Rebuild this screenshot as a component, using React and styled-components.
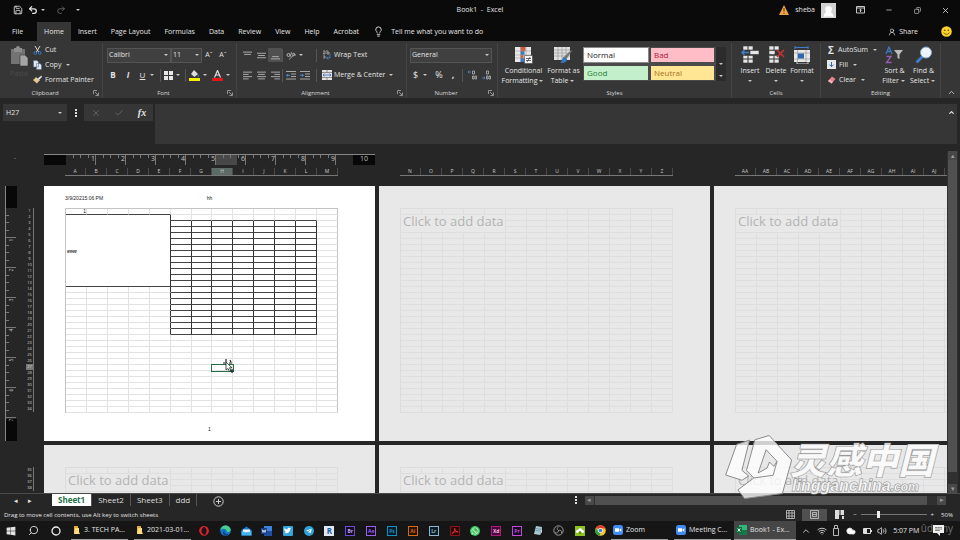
import styled, { createGlobalStyle, css } from "styled-components";
import { useState } from "react";
import {
  FaWindows,
  FaOpera,
  FaTwitter,
  FaTelegramPlane,
  FaWhatsapp,
} from "react-icons/fa";
import {
  Search,
  Lightbulb,
  Minus,
  X,
  Check,
  ChevronUp,
  Copy as Restore,
  Undo2,
  Redo2,
  Save,
  Volume2,
  Wifi,
  Cloud,
  UserRound,
} from "lucide-react";

const GlobalStyle = createGlobalStyle`
  * {
    box-sizing: border-box;
  }
  body {
    margin: 0;
    background: #262626;
    color: #e4e4e4;
    font: 7px/10px "Open Sans", "Segoe UI", sans-serif;
  }
  button, input, textarea, select {
    margin: 0;
    padding: 0;
    border: 0;
    background: none;
    color: inherit;
    font: inherit;
  }
  svg {
    display: block;
    flex: none;
  }
`;

const Window = styled.div`
  display: flex;
  flex-direction: column;
  height: 100vh;
  overflow: hidden;
`;

const Row = styled.div`
  display: flex;
  align-items: center;
  gap: ${(p) => p.$gap || 0}px;
`;

/* title bar */

const TitleBar = styled.header`
  display: grid;
  grid-template-columns: 1fr auto 1fr;
  align-items: center;
  height: 20px;
  flex: none;
  background: #0a0a0a;
`;

const QuickAccess = styled(Row)`
  padding-left: 12px;
  gap: 5px;
`;

const WindowControls = styled(Row)`
  justify-content: flex-end;
  padding-right: 10px;
  gap: 20px;
`;

const Account = styled(Row)`
  gap: 6px;
`;

const Avatar = styled.span`
  display: flex;
  align-items: flex-end;
  justify-content: center;
  width: 15px;
  height: 15px;
  background: #d2d2d2;
`;

const Title = styled.h1`
  margin: 0;
  font-size: 7px;
  font-weight: 400;
  white-space: pre;
`;

const IconButton = styled.button`
  display: flex;
  align-items: center;
  justify-content: center;
  gap: 1px;
  min-width: ${(p) => p.$w || 8}px;
  height: ${(p) => p.$h || 12}px;
  background: ${(p) => (p.$on ? "#505050" : "none")};
  color: ${(p) => (p.$dim ? "#6c6c6c" : "inherit")};
`;

const Mirrored = styled.span`
  display: block;
  transform: scaleX(-1);
`;

/* ribbon tabs */

const TabBar = styled.nav`
  display: flex;
  align-items: stretch;
  height: 21px;
  flex: none;
  padding: 2px 8px 0 5px;
  background: #0a0a0a;
`;

const Tab = styled.button`
  padding: 0 7px;
  background: ${(p) => (p.$active ? "#363636" : "none")};
  &:first-child {
    margin-right: 7px;
  }
`;

const TellMe = styled.button`
  display: flex;
  align-items: center;
  gap: 7px;
  padding-left: 7px;
`;

const ShareArea = styled(Row)`
  margin-left: auto;
  gap: 23px;
`;

/* ribbon */

const Ribbon = styled.div`
  display: flex;
  height: 57px;
  flex: none;
  padding-top: 2px;
  background: #363636;
`;

const Group = styled.section`
  display: flex;
  flex-direction: column;
  flex: none;
  width: ${(p) => p.$w}px;
  border-right: 1px solid #444;
`;

const GroupBody = styled.div`
  display: flex;
  flex: 1;
  padding: ${(p) => p.$pad || "0 6px"};
  gap: ${(p) => p.$gap || 0}px;
`;

const GroupFooter = styled.div`
  position: relative;
  display: flex;
  align-items: center;
  justify-content: center;
  height: 11px;
  padding-right: ${(p) => (p.$plain ? 0 : 12)}px;
  font-size: 6px;
  color: #d8d8d8;
  svg {
    position: absolute;
    right: 3px;
  }
`;

const Stack = styled.div`
  display: flex;
  flex-direction: column;
  justify-content: space-around;
  align-items: flex-start;
`;

const Command = styled.button`
  display: flex;
  align-items: center;
  gap: ${(p) => p.$gap || 3}px;
  height: 14px;
  white-space: nowrap;
`;

const BigCommand = styled.button`
  display: flex;
  flex-direction: column;
  align-items: center;
  justify-content: flex-start;
  width: ${(p) => p.$w}px;
  padding-top: 3px;
  color: ${(p) => (p.$dim ? "#4c4c4c" : "inherit")};
  white-space: nowrap;
  svg {
    margin-bottom: 2px;
  }
`;

const Caret = styled.i`
  display: inline-block;
  flex: none;
  border: 2px solid transparent;
  border-top-color: #c8c8c8;
  border-bottom: 0;
  margin: ${(p) => (p.$below ? "4px" : "0")} 2px 0;
  vertical-align: middle;
`;

const Picker = styled.div`
  display: flex;
  align-items: center;
  width: ${(p) => p.$w}px;
  height: 15px;
  border: 1px solid #545454;
  background: #404040;
  select {
    appearance: none;
    flex: 1;
    min-width: 0;
    padding-left: 1px;
  }
`;

const Divider = styled.span`
  width: 1px;
  height: 13px;
  background: #555;
`;

const ToolRow = styled(Row)`
  height: 20px;
`;

const Glyph = styled.span`
  min-width: 8px;
  font-size: ${(p) => p.$size || 8}px;
  font-weight: ${(p) => (p.$bold ? 700 : 400)};
  font-style: ${(p) => (p.$italic ? "italic" : "normal")};
  text-decoration: ${(p) => (p.$underline ? "underline" : "none")};
`;

const FxGlyph = styled(Glyph)`
  font-family: "Liberation Serif", "Times New Roman", serif;
`;

const Gallery = styled.div`
  display: grid;
  grid-template-columns: 66px 65px 10px;
  grid-template-rows: 16px 16px;
  gap: 2px 1px;
  align-self: flex-start;
  margin: 4px 0 0 1px;
  background: #4a4a4a;
`;

const StyleCell = styled.button`
  margin: 1px;
  padding-left: 3px;
  background: ${(p) => p.$bg};
  color: ${(p) => p.$color};
  font-size: 8px;
  text-align: left;
  outline: ${(p) => (p.$active ? "1px solid #8a8a8a" : "none")};
`;

const GalleryScroll = styled.div`
  grid-column: 3;
  grid-row: 1 / 3;
  display: flex;
  flex-direction: column;
  justify-content: flex-end;
  align-items: center;
  gap: 10px;
  padding-bottom: 4px;
  background: #2c2c2c;
`;

const CollapseRibbon = styled.button`
  margin: auto 4px 0 auto;
  height: 12px;
`;

/* formula bar */

const FormulaBar = styled.div`
  display: flex;
  align-items: flex-start;
  height: 46px;
  flex: none;
  padding: 6px 3px 0;
`;

const NameBox = styled.div`
  display: flex;
  align-items: center;
  width: 64px;
  height: 17px;
  padding-right: 3px;
  background: #363636;
  input {
    flex: 1;
    min-width: 0;
    padding-left: 3px;
  }
`;

const DotHandle = styled.span`
  display: flex;
  flex-direction: column;
  justify-content: center;
  align-items: center;
  gap: 1px;
  width: 17px;
  height: ${(p) => p.$h || 17}px;
  i {
    width: 2px;
    height: 2px;
    background: #ddd;
  }
`;

const FormulaButtons = styled(Row)`
  justify-content: space-around;
  width: 69px;
  height: 17px;
  margin-right: 2px;
  background: #363636;
`;

const FormulaField = styled.div`
  display: flex;
  flex: 1;
  height: 40px;
  background: #363636;
  textarea {
    flex: 1;
    resize: none;
  }
  button {
    width: 9px;
    height: 16px;
  }
`;

/* sheet area */

const WorkArea = styled.main`
  display: flex;
  flex: 1;
  min-height: 0;
`;

const Canvas = styled.div`
  display: grid;
  grid-template-columns: 40px repeat(3, 331px);
  grid-template-rows: 28px 255px 255px;
  gap: 4px;
  flex: 1;
  min-width: 0;
  padding-top: 10px;
  overflow: hidden;
`;

const Corner = styled.div`
  padding-left: 14px;
  color: #888;
  line-height: 7px;
`;

const ColumnHead = styled.div`
  display: flex;
  flex-direction: column;
  padding-bottom: 6px;
`;

const Ruler = styled.div`
  display: flex;
  height: 11px;
  border-top: 1px solid #888;
`;

const RulerEnd = styled.div`
  ${(p) => (p.$vertical ? "height" : "width")}: 22px;
  flex: none;
  background: #080808;
  color: #c4c4c4;
  line-height: 8px;
  text-align: center;
  &:last-child {
    ${(p) => (p.$vertical ? "margin-top" : "margin-left")}: auto;
  }
`;

const Inch = styled.div`
  display: flex;
  flex-direction: ${(p) => (p.$vertical ? "column" : "row")};
  position: relative;
  flex: 0 0 30px;
  background: ${(p) =>
    p.$lit ? "linear-gradient(to right, #484848 21px, transparent 21px)" : "none"};
  i {
    flex: 1;
    ${(p) => (p.$vertical ? "border-bottom" : "border-right")}: 1px solid #777;
    ${(p) => (p.$vertical ? "width" : "height")}: 3px;
  }
  i:nth-child(4) {
    ${(p) => (p.$vertical ? "width" : "height")}: 10px;
  }
  span {
    position: absolute;
    color: #c4c4c4;
    ${(p) =>
      p.$vertical
        ? css`
            bottom: -7px;
            left: 4px;
            font-size: 5px;
            transform: rotate(-90deg);
          `
        : css`
            top: -1px;
            right: 1px;
          `}
  }
`;

const Letters = styled.div`
  display: flex;
  width: 273px;
  height: 8px;
  margin: auto 0 0 21px;
  border-bottom: 1px solid #777;
`;

const Letter = styled.span`
  flex: 0 0 21px;
  border-right: 1px solid #4a4a4a;
  background: ${(p) => (p.$on ? "#5d6b66" : "none")};
  color: #c8c8c8;
  font-size: 5px;
  line-height: 7px;
  text-align: center;
`;

const RowRail = styled.div`
  display: flex;
  align-items: flex-start;
  gap: 9px;
  padding-left: 5px;
`;

const SideRuler = styled.div`
  display: flex;
  flex-direction: column;
  width: 12px;
  height: 255px;
  border-left: ${(p) => (p.$blank ? "0" : "1px solid #888")};
`;

const RowNumbers = styled.div`
  width: 8px;
  margin-top: 22px;
  border-right: 1px solid #777;
`;

const RowNumber = styled.div`
  height: 6px;
  background: ${(p) => (p.$on ? "#777" : "none")};
  color: #d4d4d4;
  font-size: 4px;
  line-height: 6px;
  text-align: center;
`;

const Page = styled.article`
  position: relative;
  height: 255px;
  padding: 22px 21px 0;
  background: ${(p) => (p.$live ? "#fff" : "#e8e8e8")};
  color: #222;
`;

const PageHeader = styled.div`
  position: absolute;
  top: 8px;
  left: 21px;
  right: 21px;
  display: grid;
  grid-template-columns: 1fr auto 1fr;
  font: 5px/8px "Liberation Sans", Arial, sans-serif;
`;

const PageFooter = styled.div`
  padding-top: 12px;
  font: 5px/8px "Liberation Sans", Arial, sans-serif;
  text-align: center;
`;

const Sheet = styled.table`
  width: 273px;
  table-layout: fixed;
  border-spacing: 0;
  border-left: 1px solid ${(p) => (p.$live ? "#c4c4c4" : "#dcdcdc")};
  border-top: 1px solid ${(p) => (p.$live ? "#c4c4c4" : "#dcdcdc")};
  font: 5px/5px "Liberation Sans", Arial, sans-serif;
`;

const Cell = styled.td`
  height: 6px;
  padding: 0;
  border: 0 solid ${(p) => (p.$live ? "#e2e2e2" : "#dedede")};
  border-width: 0 1px 1px 0;
  ${(p) => p.$edge && "border-right-color: #c4c4c4;"}
  ${(p) => p.$right && "border-right-color: #333;"}
  ${(p) => p.$bottom && "border-bottom-color: #444;"}
  text-align: ${(p) => (p.$align ? p.$align : "left")};
  ${(p) =>
    p.$selected &&
    css`
      outline: 1px solid #217346;
    `}
`;

const Merged = styled(Cell)`
  padding-left: 1px;
  font-weight: 700;
  font-style: italic;
  font-size: 4px;
`;

const Prompt = styled(Cell)`
  padding-left: 2px;
  color: #b4b4b4;
  font: 13px/13px "Open Sans", "Segoe UI", sans-serif;
  vertical-align: top;
  white-space: nowrap;
`;

const MoveCursor = styled.svg`
  position: absolute;
  top: 172px;
  left: 176px;
`;

const VScroll = styled.div`
  display: flex;
  flex-direction: column;
  align-items: center;
  width: 11px;
  margin: 7px 2px 0 0;
  background: #303030;
`;

const ScrollThumb = styled.div`
  flex: 1;
  align-self: stretch;
  margin: 0 1px ${(p) => (p.$rest ? 12 : 0)}px;
  background: #505050;
`;

const ScrollButton = styled.button`
  display: flex;
  align-items: center;
  justify-content: center;
  width: 9px;
  height: 9px;
  background: #484848;
  color: #999;
`;

/* bottom bars */

const SheetBar = styled.footer`
  display: flex;
  align-items: flex-start;
  height: 15px;
  flex: none;
  padding-right: 14px;
  border-top: 1px solid #4a4a4a;
`;

const SheetNav = styled(Row)`
  justify-content: center;
  width: 52px;
  height: 14px;
  gap: 9px;
  padding-right: 7px;
`;

const SheetTab = styled.button`
  height: 12px;
  padding: 0 6px;
  border-right: 1px solid #555;
  background: ${(p) => (p.$active ? "#fff" : "none")};
  color: ${(p) => (p.$active ? "#217346" : "#ddd")};
  font-size: 8px;
  font-weight: ${(p) => (p.$active ? 700 : 400)};
  line-height: 10px;
`;

const HScroll = styled(Row)`
  width: 40%;
  height: 12px;
  margin-left: auto;
`;

const HTrack = styled.div`
  display: flex;
  flex: 1;
  height: 9px;
  padding-right: 9px;
  background: #303030;
`;

const StatusBar = styled.div`
  display: flex;
  align-items: center;
  justify-content: space-between;
  height: 13px;
  flex: none;
  padding: 0 4px;
  background: #262626;
  font-size: 6px;
`;

const Zoom = styled.label`
  display: flex;
  align-items: center;
  gap: 4px;
  margin-left: 2px;
  input {
    appearance: none;
    width: 66px;
    height: 7px;
    background: linear-gradient(#777, #777) center / 100% 1px no-repeat;
  }
  input::-webkit-slider-thumb {
    appearance: none;
    width: 3px;
    height: 7px;
    background: #eee;
  }
`;

const Taskbar = styled.div`
  display: flex;
  align-items: stretch;
  height: 19px;
  flex: none;
  background: #161616;
`;

const StartArea = styled(Row)`
  gap: 12px;
  padding: 0 10px 0 6px;
`;

const TaskButton = styled.button`
  display: flex;
  align-items: center;
  gap: 3px;
  width: ${(p) => p.$w}px;
  flex: none;
  margin-right: ${(p) => p.$after || 6}px;
  padding-left: 2px;
  border-bottom: 1px solid #a0a0a0;
  background: ${(p) => (p.$active ? "#464646" : "none")};
  white-space: nowrap;
`;

const Pinned = styled.div`
  display: flex;
  flex: 1;
  > button {
    display: flex;
    flex: 1;
    align-items: center;
    justify-content: center;
  }
`;

const AppTile = styled.span`
  width: 10px;
  height: 10px;
  border: 1px solid ${(p) => p.$color};
  background: ${(p) => p.$bg || "#160a22"};
  color: ${(p) => p.$ink || p.$color};
  font-size: ${(p) => p.$size || 5}px;
  font-weight: 700;
  line-height: 8px;
  text-align: center;
`;

const RoundTile = styled.span`
  display: flex;
  align-items: center;
  justify-content: center;
  width: 10px;
  height: 10px;
  border-radius: ${(p) => p.$radius || "50%"};
  background: ${(p) => p.$bg};
  color: #fff;
`;

const Tray = styled.div`
  display: flex;
  align-items: center;
  justify-content: space-between;
  width: 160px;
  flex: none;
  padding: 0 16px 0 1px;
  > span {
    margin-right: 8px;
  }
`;

const Udemy = styled.span`
  position: absolute;
  right: 7px;
  bottom: 6px;
  color: rgba(255, 255, 255, 0.4);
  font-size: 10px;
  line-height: 12px;
`;

const Watermark = styled.div`
  position: absolute;
  right: 26px;
  bottom: 41px;
  display: flex;
  align-items: flex-start;
  color: rgba(255, 255, 255, 0.8);
  pointer-events: none;
`;

const WatermarkText = styled.div`
  padding-top: 5px;
  font-weight: 900;
  font-style: italic;
  -webkit-text-stroke: 1px #8a8a8a;
  paint-order: stroke fill;
  strong {
    display: block;
    margin-left: -2px;
    font: italic 900 36px/36px "Noto Sans CJK SC", sans-serif;
  }
  span {
    display: block;
    font-family: "Liberation Sans", Arial, sans-serif;
    font-size: 16px;
    line-height: 20px;
  }
  small {
    font-size: 12px;
  }
`;

/* drawings */

const Launcher = () => (
  <svg width="6" height="6" viewBox="0 0 6 6" fill="none" stroke="#aaa">
    <path d="M.5 4V.5H4M2 2l3 3M5.500 2.500v3h-3" strokeWidth=".8" />
  </svg>
);

const PasteIcon = () => (
  <svg width="20" height="21" viewBox="0 0 20 21">
    <path d="M2 3h14v15H2z" fill="#737373" />
    <path d="M5 2h2a2 2 0 0 1 4 0h2v4H5z" fill="#8d8d8d" />
    <path d="M11 9h5l3 3v8h-8z" fill="#a5a5a5" stroke="#363636" strokeWidth=".6" />
  </svg>
);

const CutIcon = () => (
  <svg width="9" height="9" viewBox="0 0 9 9" fill="none">
    <path d="M2 0l3.600 6M7 0L3.400 6" stroke="#d8d8d8" />
    <circle cx="2.300" cy="7" r="1.400" stroke="#3d78c0" />
    <circle cx="6.700" cy="7" r="1.400" stroke="#3d78c0" />
  </svg>
);

const CopyIcon = () => (
  <svg width="9" height="10" viewBox="0 0 9 10" fill="#dfe6f0" stroke="#51698a" strokeWidth=".5">
    <path d="M.5.500h3.500l1.500 1.500v5h-5zM3.500 3.500h3.500l1.500 1.500v4.500h-5z" />
  </svg>
);

const BrushIcon = () => (
  <svg width="9" height="9" viewBox="0 0 9 9">
    <path d="M8.500.500L9 2 6 5 4.500 3.500z" fill="#ddd" />
    <path d="M3 2.500L6 6 4 8.500 0 5z" fill="#e8c88c" />
    <path d="M3 2.500L6.500 6" stroke="#fff" />
  </svg>
);

const BordersIcon = () => (
  <svg width="9" height="9" viewBox="0 0 9 9" fill="#e8e8e8">
    <path d="M0 0h4v4H0zM5 0h4v4H5zM0 5h4v4H0zM5 5h4v4H5z" />
  </svg>
);

const FillColorIcon = () => (
  <svg width="11" height="11" viewBox="0 0 11 11">
    <path d="M5 0l4 4-3.500 3L2 4z" fill="#ddd" />
    <path d="M9 4c1 1.500 1 2 .5 3-1 0-1-1-.5-3z" fill="#4b8ad0" />
    <path d="M0 8h11v3H0z" fill="#f5f000" />
  </svg>
);

const FontColorIcon = () => (
  <svg width="11" height="11" viewBox="0 0 11 11">
    <path d="M2.500 7.500L5.500.500l3 7M3.500 5h4" fill="none" stroke="#ddd" strokeWidth="1.200" />
    <path d="M0 8h11v3H0z" fill="#e01818" />
  </svg>
);

const LinesIcon = ({ d = "M0 1h8M1 3h6M0 5h8M1 7h6", color = "#b5b5b5" }) => (
  <svg width="9" height="9" viewBox="0 0 8 8" fill="none" stroke={color}>
    <path d={d} strokeWidth=".8" />
  </svg>
);

const IndentIcon = ({ flip }) => (
  <svg width="10" height="9" viewBox="0 0 10 9" fill="none">
    <path d="M0 .5h10M5 3h5M5 5.500h5M0 8h10" stroke="#b5b5b5" strokeWidth=".9" />
    <path d={flip ? "M0 4.300h3.500M2 2.800l1.500 1.500L2 5.800" : "M4 4.300H.5M2 2.800L.5 4.300 2 5.800"} stroke="#4b8ad0" />
  </svg>
);

const AngleIcon = () => (
  <svg width="10" height="9" viewBox="0 0 10 9" fill="none" stroke="#b5b5b5">
    <circle cx="2.500" cy="4" r="1.500" />
    <path d="M4 2.500L5 6M5 1l1.500 3.500a1.300 1.300 0 1 0 0-2M3 8.500L9 3M7 3h2v2" strokeWidth=".8" />
  </svg>
);

const WrapIcon = () => (
  <svg width="9" height="10" viewBox="0 0 9 10" fill="none">
    <path d="M1 1h2v3H1.500V2.500M5 0v4h2V2H5M1 6h2M1 8h2v-2" stroke="#b5b5b5" strokeWidth=".8" />
    <path d="M8 4v4H4.500M6 6.500L4.500 8 6 9.500" stroke="#4b8ad0" strokeWidth=".8" />
  </svg>
);

const MergeIcon = () => (
  <svg width="10" height="10" viewBox="0 0 10 10">
    <path d="M0 0h10v10H0z" fill="#e3e3e3" />
    <path d="M0 2.500h10M0 7.500h10M5 0v2.500M5 7.500V10" stroke="#555" strokeWidth=".6" />
    <path d="M1 5h8M2.500 3.700L1 5l1.500 1.300M7.500 3.700L9 5 7.500 6.300" fill="none" stroke="#2d6db8" strokeWidth=".8" />
  </svg>
);

const DecimalIcon = ({ left }) => (
  <svg width="9" height="10" viewBox="0 0 9 10" fill="none" strokeWidth=".8">
    <path d={left ? "M0 2h3M1.300.700L0 2l1.300 1.300" : "M0 8h3M1.700 6.700L3 8 1.700 9.300"} stroke="#4b8ad0" />
    <path d="M4.500 1h2v3h-2zM4.500 6h1.500v3H4.500zM7 6h1.500v3H7z" stroke="#b5b5b5" />
  </svg>
);

const CondIcon = () => (
  <svg width="18" height="18" viewBox="0 0 18 18">
    <path d="M0 1h16v15H0z" fill="#e8e8e8" />
    <path d="M5.500 1h5v4h-5zM5.500 9h3v3h-3z" fill="#d9593d" />
    <path d="M5.500 5h4v4h-4zM5.500 12h5v4h-5z" fill="#3f78bd" />
    <path d="M0 5h16M0 9h16M0 12h16M5.500 1v15M11 1v15" stroke="#9a9a9a" strokeWidth=".6" />
    <path d="M9.500 9.500h8v8h-8z" fill="#f4f4f4" stroke="#444" strokeWidth=".6" />
    <path d="M11 12.500h5M11 14.500h5M15 11l-3 5" stroke="#333" strokeWidth=".7" />
  </svg>
);

const TableStyleIcon = () => (
  <svg width="19" height="18" viewBox="0 0 19 18">
    <path d="M0 1h16v13H0z" fill="#e0e0e0" />
    <path d="M0 4h16M0 7h16M0 10h16M4 1v13M8 1v13M12 1v13" stroke="#8d8d8d" strokeWidth=".6" />
    <path d="M18.500 4l-6 9-3-1.500 6-6z" fill="#777" />
    <path d="M9.500 11l3.500 2c0 3-3 4.500-7 4 2-1 2-5 3.500-6z" fill="#3976bd" />
  </svg>
);

const CellsIcon = ({ kind }) => (
  <svg width="18" height="18" viewBox="0 0 18 18">
    <g fill="#e6e6e6" stroke="#363636" strokeWidth=".6">
      <path d="M2 0h5v4H2zM7 0h5v4H7zM2 13h5v4H2zM7 13h5v4H7zM2 9.500h5v3.500H2zM7 9.500h5v3.500H7z" />
      <path d={kind === "insert" ? "M9 4.500h9v4H9z" : "M2 4.500h6v4H2z"} />
    </g>
    {kind === "insert" ? (
      <path d="M8 6.500H1M3.500 4L1 6.500 3.500 9" fill="none" stroke="#3f7fc8" strokeWidth="1.400" />
    ) : (
      <path d="M10 4l7 7M17 4l-7 7" stroke="#c83232" strokeWidth="1.600" />
    )}
  </svg>
);

const FormatIcon = () => (
  <svg width="18" height="18" viewBox="0 0 18 18">
    <path d="M2 1.500h13M2 0v3M15 0v3" stroke="#3f7fc8" />
    <path d="M1 4h16v12H1z" fill="#e8e8e8" />
    <path d="M1 7h16M1 13h16M4.500 4v12M13 4v12" stroke="#888" strokeWidth=".6" />
    <path d="M5 7.500h6v5H5z" fill="#2e66ad" />
    <path d="M4 16v2h11v-2" fill="none" stroke="#ccc" />
  </svg>
);

const FillDownIcon = () => (
  <svg width="9" height="9" viewBox="0 0 9 9">
    <path d="M0 0h9v9H0z" fill="#e8e8e8" />
    <path d="M4.500 2v4.500M2.500 4.700l2 2 2-2" fill="none" stroke="#2e66ad" />
  </svg>
);

const EraserIcon = () => (
  <svg width="9" height="8" viewBox="0 0 9 8">
    <path d="M5 .5l3.500 2.500L4.500 7.500 1 5z" fill="#e8828f" />
    <path d="M2.500 3.500L6 6 4.500 7.500 1 5z" fill="#f3b8c0" />
  </svg>
);

const SortIcon = () => (
  <svg width="19" height="18" viewBox="0 0 19 18" fill="none">
    <path d="M1 8l3-7 3 7M2 5.500h4" stroke="#3f78bd" strokeWidth="1.300" />
    <path d="M1.500 10.500H6L1.500 16.500H6.500" stroke="#9a5ab0" strokeWidth="1.300" />
    <path d="M9 4h9l-3.500 4.500V13l-2-1V8.500z" fill="#bdbdbd" />
  </svg>
);

const FindIcon = () => (
  <svg width="18" height="18" viewBox="0 0 18 18">
    <path d="M1.500 16.500l6-6" stroke="#3f7fc8" strokeWidth="2.600" />
    <circle cx="11" cy="6.500" r="5.500" fill="#eef4fa" stroke="#7fa6cf" />
  </svg>
);

const Smiley = () => (
  <svg width="11" height="11" viewBox="0 0 11 11">
    <circle cx="5.500" cy="5.500" r="5.300" fill="#fbd12c" />
    <circle cx="3.700" cy="4.200" r=".8" fill="#5a4300" />
    <circle cx="7.300" cy="4.200" r=".8" fill="#5a4300" />
    <path d="M2.700 6.500c1 2.400 4.600 2.400 5.600 0" fill="none" stroke="#5a4300" strokeWidth=".8" />
  </svg>
);

const Warning = () => (
  <svg width="10" height="10" viewBox="0 0 10 10">
    <path d="M5 0l5 10H0z" fill="#eda24a" />
    <path d="M5 3v3.500M5 7.500v1.300" stroke="#59350b" />
  </svg>
);

const RibbonOptions = () => (
  <svg width="9" height="8" viewBox="0 0 9 8" fill="none" stroke="#ddd">
    <path d="M.5.500h8v6.500h-8zM.5 2h8M4.500 6V3.300M3.200 4.500l1.300-1.300 1.300 1.300" strokeWidth=".9" />
  </svg>
);

const Folder = () => (
  <svg width="8" height="10" viewBox="0 0 8 10">
    <path d="M1 1h4v7H1z" fill="#e3ab35" />
    <path d="M2 3h4v4l1 2H1z" fill="#ffdc7c" />
  </svg>
);

const EdgeIcon = () => (
  <svg width="11" height="11" viewBox="0 0 11 11">
    <circle cx="5.500" cy="5.500" r="5.300" fill="#1678c8" />
    <path d="M.3 5C1-.5 9-1.500 10.700 4.500c.2 2.500-3 3-4.200 2C7.500 4 3 2.500.3 5z" fill="#47cf8c" />
    <path d="M4.500 5.500c-1 3 2 4.500 4.500 3-1.500 2.500-5 2.500-6 0-.5-1.500.5-3 1.500-3z" fill="#0b3f86" />
  </svg>
);

const MailIcon = () => (
  <svg width="11" height="10" viewBox="0 0 11 10">
    <path d="M.5 4L5.500.500l5 3.500v5.500H.5z" fill="#1b78c8" />
    <path d="M2 3.500h7v3H2z" fill="#e9f5ff" />
    <path d="M.5 4.500l5 3 5-3v5H.5z" fill="#43b5f0" />
  </svg>
);

const WordIcon = () => (
  <svg width="11" height="10" viewBox="0 0 11 10">
    <path d="M3 0h8v10H3z" fill="#3d83dd" />
    <path d="M3 5h8v5H3z" fill="#1e4fa3" />
    <path d="M0 2h6v6H0z" fill="#153e86" />
    <path d="M1.200 3.500l.8 3 1-2.500 1 2.500.8-3" fill="none" stroke="#fff" strokeWidth=".7" />
  </svg>
);

const AcrobatIcon = () => (
  <svg width="10" height="10" viewBox="0 0 10 10">
    <path d="M.5.500h9v9h-9z" fill="#2b0405" stroke="#8b1416" />
    <path d="M2 7.500C4 6.500 5.500 4 4.700 2.300 5 5 6.500 6.200 8.200 6 6 5.300 4 6 2 7.500z" fill="none" stroke="#ef3a3a" strokeWidth=".8" />
  </svg>
);

const NotesIcon = () => (
  <svg width="10" height="11" viewBox="0 0 10 11">
    <path d="M3 1l6 1-2 8-6-1z" fill="#a9c9d4" />
    <path d="M3 3.500l5 .7M2.600 5.500l5 .7" stroke="#5d8a9a" strokeWidth=".7" />
    <path d="M7 10l2-3V2z" fill="#dcecf2" />
  </svg>
);

const ObsIcon = () => (
  <svg width="11" height="11" viewBox="0 0 11 11" fill="none" stroke="#9a9a9a">
    <circle cx="5.500" cy="5.500" r="4.700" />
    <path d="M5.500 5.500C3.500 4.500 4 2.500 5.500 2M5.500 5.500c2-1 3.500.5 3 2.500M5.500 5.500c0 2.500-2 3-3.500 2" strokeWidth=".9" />
  </svg>
);

const CloudTile = () => (
  <svg width="10" height="10" viewBox="0 0 10 10">
    <path d="M0 0h10v10H0z" fill="#8bc220" />
    <path d="M2.500 7C0 6.500 1 3.500 3 4c.5-2.500 4-2.500 4.500 0C9.500 4 9.500 7 7.500 7z" fill="#fff" />
    <circle cx="5" cy="6.500" r="1.500" fill="#5f9410" />
  </svg>
);

const ChromeIcon = () => (
  <svg width="11" height="11" viewBox="0 0 11 11">
    <circle cx="5.500" cy="5.500" r="5.300" fill="#f8c828" />
    <path d="M5.500 5.500L1 2.700C3.500-.8 8.500-.3 10.300 3.500H5.500z" fill="#e33b2e" />
    <path d="M1 2.700l2.500 4.300L5.500 8l-1 2.700C.5 10-.9 6 1 2.700z" fill="#2fa14f" />
    <circle cx="5.500" cy="5.500" r="2.400" fill="#fff" />
    <circle cx="5.500" cy="5.500" r="1.800" fill="#3f7de0" />
  </svg>
);

const ZoomIcon = () => (
  <svg width="10" height="10" viewBox="0 0 10 10">
    <rect width="10" height="10" rx="2.500" fill="#3f8cf5" />
    <path d="M2 3.300h4v3.400H2zM6.500 4.500L8.300 3.300v3.400L6.500 5.500z" fill="#fff" />
  </svg>
);

const ExcelIcon = () => (
  <svg width="11" height="10" viewBox="0 0 11 10">
    <path d="M3 0h8v10H3z" fill="#2fb877" />
    <path d="M3 5h4v5H3zM7 5h4v5H7z" fill="#16794a" />
    <path d="M0 2h6v6H0z" fill="#0f6b3c" />
    <path d="M1.700 3.400l2.600 3.200M4.300 3.400L1.700 6.600" stroke="#fff" strokeWidth=".9" />
  </svg>
);

const UsbIcon = () => (
  <svg width="8" height="11" viewBox="0 0 8 11" fill="none" stroke="#ccc">
    <path d="M2.500 3.500V.5h3v3M1.500 3.500h5v7h-5z" strokeWidth=".9" />
  </svg>
);

const BatteryIcon = () => (
  <svg width="10" height="8" viewBox="0 0 10 8">
    <path d="M1.500 1.500h7v5h-7z" fill="none" stroke="#ddd" />
    <path d="M2 2h3v4H2zM9 3h1v2H9z" fill="#ddd" />
  </svg>
);

const NoticeIcon = () => (
  <svg width="11" height="11" viewBox="0 0 11 11">
    <path d="M0 0h11v8H7v3L4 8H0z" fill="#eee" />
    <path d="M2 2.500h7M2 4h7M2 5.500h5" stroke="#555" strokeWidth=".7" />
  </svg>
);

const WatermarkLogo = () => (
  <svg width="67" height="64" viewBox="23 29 202 192" fill="rgba(255,255,255,.78)" stroke="#8a8a8a" strokeWidth="3">
    <path d="M58 57L97 44 74 135l20 17-20 13L25 149z" />
    <path
      fillRule="evenodd"
      d="M113 43l43-13 68 74-28 101-114 15-20-26 48-36-22-23zM147 73l-24 70 27-15 7-18 13 13 10-15z"
    />
    <path d="M110 158l58-8 12-42" fill="none" />
  </svg>
);

/* data */

const tabs = ["File", "Home", "Insert", "Page Layout", "Formulas", "Data", "Review", "View", "Help", "Acrobat"];
const sheets = ["Sheet1", "Sheet2", "Sheet3", "ddd"];
const columnSets = [
  "ABCDEFGHIJKLM".split(""),
  "NOPQRSTUVWXYZ".split(""),
  "ABCDEFGHIJ".split("").map((c) => "A" + c),
];
const range = (n) => Array.from({ length: n }, (_, i) => i);

function DataSheet() {
  return (
    <Sheet $live>
      <tbody>
        {range(34).map((r) => (
          <tr key={r}>
            {range(13).map((c) => {
              if (r > 0 && r < 13 && c < 5) {
                // A2:E13 is one merged cell
                return r === 1 && c === 0 ? (
                  <Merged key={c} $live $right $bottom colSpan={5} rowSpan={12}>
                    gggg
                  </Merged>
                ) : null;
              }
              const boxed = r > 1 && r < 21 && c > 4 && c < 12;
              return (
                <Cell
                  key={c}
                  $live
                  $edge={c === 12}
                  $right={boxed || (c === 4 && r > 12 && r < 21)}
                  $bottom={boxed || (r === 1 && c < 12) || (r === 0 && c < 5)}
                  $selected={r === 26 && c === 7}
                  $align="right"
                >
                  {r === 0 && c === 0 ? "1" : null}
                </Cell>
              );
            })}
          </tr>
        ))}
      </tbody>
    </Sheet>
  );
}

function BlankSheet() {
  return (
    <Sheet>
      <tbody>
        {range(34).map((r) => (
          <tr key={r}>
            {range(13).map((c) => {
              if (r > 0 && r < 4 && c < 5) {
                return r === 1 && c === 0 ? (
                  <Prompt key={c} colSpan={5} rowSpan={3}>
                    Click to add data
                  </Prompt>
                ) : null;
              }
              return <Cell key={c} />;
            })}
          </tr>
        ))}
      </tbody>
    </Sheet>
  );
}

function Rail({ first, count, ruler }) {
  return (
    <RowRail>
      <SideRuler $blank={!ruler}>
        {ruler && (
          <>
            <RulerEnd $vertical />
            {range(7).map((n) => (
              <Inch key={n} $vertical>
                <i />
                <i />
                <i />
                <i />
                <span>{n + 1}</span>
              </Inch>
            ))}
            <RulerEnd $vertical />
          </>
        )}
      </SideRuler>
      <RowNumbers>
        {range(count).map((n) => (
          <RowNumber key={n} $on={first + n === 27}>
            {first + n}
          </RowNumber>
        ))}
      </RowNumbers>
    </RowRail>
  );
}

export default function App() {
  const [activeTab, setActiveTab] = useState("Home");
  const [activeSheet, setActiveSheet] = useState("Sheet1");
  const [zoom, setZoom] = useState(50);

  return (
    <Window>
      <GlobalStyle />
      <TitleBar>
        <QuickAccess>
          <IconButton $w={11} aria-label="Save"><Save size={10} /></IconButton>
          <IconButton $w={17} aria-label="Undo"><Undo2 size={10} strokeWidth={3} /><Caret /></IconButton>
          <IconButton $w={17} $dim aria-label="Redo"><Redo2 size={10} /></IconButton>
          <IconButton aria-label="Customize"><Caret /></IconButton>
        </QuickAccess>
        <Title>Book1  -  Excel</Title>
        <WindowControls>
          <Account>
            <Warning />
            <span>sheba</span>
            <Avatar><UserRound size={13} fill="#fff" color="#fff" /></Avatar>
          </Account>
          <IconButton aria-label="Ribbon options"><RibbonOptions /></IconButton>
          <IconButton aria-label="Minimize"><Minus size={8} /></IconButton>
          <IconButton aria-label="Restore"><Mirrored><Restore size={7} /></Mirrored></IconButton>
          <IconButton aria-label="Close"><X size={9} /></IconButton>
        </WindowControls>
      </TitleBar>

      <TabBar>
        {tabs.map((t) => (
          <Tab key={t} $active={t === activeTab} onClick={() => setActiveTab(t)}>
            {t}
          </Tab>
        ))}
        <TellMe>
          <Lightbulb size={11} /> Tell me what you want to do
        </TellMe>
        <ShareArea>
          <Command><UserRound size={8} /> Share</Command>
          <Smiley />
        </ShareArea>
      </TabBar>

      <Ribbon>
        <Group $w={103}>
          <GroupBody $pad="0 0 0 9px" $gap={4}>
            <BigCommand $w={20} $dim><PasteIcon />Paste</BigCommand>
            <Stack>
              <Command><CutIcon />Cut</Command>
              <Command><CopyIcon />Copy <Caret /></Command>
              <Command><BrushIcon />Format Painter</Command>
            </Stack>
          </GroupBody>
          <GroupFooter>Clipboard<Launcher /></GroupFooter>
        </Group>

        <Group $w={134}>
          <GroupBody $pad="2px 4px">
            <Stack>
              <ToolRow>
                <Picker $w={64}>
                  <select aria-label="Font"><option>Calibri</option></select>
                  <Caret />
                </Picker>
                <Picker $w={31}>
                  <select aria-label="Font size"><option>11</option></select>
                  <Caret />
                </Picker>
                <IconButton $w={14}>A&#x02C6;</IconButton>
                <IconButton $w={14}>A&#x02C7;</IconButton>
              </ToolRow>
              <ToolRow $gap={3}>
                <IconButton $w={12}><Glyph $bold>B</Glyph></IconButton>
                <IconButton $w={12}><Glyph $bold $italic>I</Glyph></IconButton>
                <IconButton $w={20}><Glyph $underline>U</Glyph><Caret /></IconButton>
                <Divider />
                <IconButton $w={18} aria-label="Borders"><BordersIcon /><Caret /></IconButton>
                <Divider />
                <IconButton $w={18} aria-label="Fill color"><FillColorIcon /><Caret /></IconButton>
                <IconButton $w={18} aria-label="Font color"><FontColorIcon /><Caret /></IconButton>
              </ToolRow>
            </Stack>
          </GroupBody>
          <GroupFooter>Font<Launcher /></GroupFooter>
        </Group>

        <Group $w={170}>
          <GroupBody $pad="2px 3px" $gap={5}>
            <Stack>
              <ToolRow>
                <IconButton $w={14} aria-label="Top align"><LinesIcon d="M0 1h8M1 3h6" /></IconButton>
                <IconButton $w={14} aria-label="Middle align"><LinesIcon d="M0 2h8M1 4h6M0 6h8" /></IconButton>
                <IconButton $w={14} $h={14} $on aria-label="Bottom align"><LinesIcon d="M1 5h6M0 7h8" /></IconButton>
                <Divider />
                <IconButton $w={24} aria-label="Orientation"><AngleIcon /><Caret /></IconButton>
              </ToolRow>
              <ToolRow>
                <IconButton $w={14} aria-label="Align left"><LinesIcon d="M0 1h8M0 3h5M0 5h8M0 7h5" /></IconButton>
                <IconButton $w={14} aria-label="Center"><LinesIcon /></IconButton>
                <IconButton $w={14} aria-label="Align right"><LinesIcon d="M0 1h8M3 3h5M0 5h8M3 7h5" /></IconButton>
                <Divider />
                <IconButton $w={16} aria-label="Decrease indent"><IndentIcon /></IconButton>
                <IconButton $w={12} aria-label="Increase indent"><IndentIcon flip /></IconButton>
              </ToolRow>
            </Stack>
            <Stack>
              <ToolRow $gap={5}><Divider /><Command><WrapIcon />Wrap Text</Command></ToolRow>
              <ToolRow $gap={5}><Divider /><Command $gap={2}><MergeIcon />Merge &amp; Center <Caret /></Command></ToolRow>
            </Stack>
          </GroupBody>
          <GroupFooter>Alignment<Launcher /></GroupFooter>
        </Group>

        <Group $w={91}>
          <GroupBody $pad="2px 3px">
            <Stack>
              <ToolRow>
                <Picker $w={82}>
                  <select aria-label="Number format"><option>General</option></select>
                  <Caret />
                </Picker>
              </ToolRow>
              <ToolRow $gap={4}>
                <IconButton $w={20}><Glyph $size={9}>$</Glyph><Caret /></IconButton>
                <IconButton $w={10}><Glyph $size={9}>%</Glyph></IconButton>
                <IconButton $w={10}><Glyph $size={9} $bold>,</Glyph></IconButton>
                <Divider />
                <IconButton $w={10} aria-label="Increase decimal"><DecimalIcon left /></IconButton>
                <IconButton $w={10} aria-label="Decrease decimal"><DecimalIcon /></IconButton>
              </ToolRow>
            </Stack>
          </GroupBody>
          <GroupFooter>Number<Launcher /></GroupFooter>
        </Group>

        <Group $w={234}>
          <GroupBody $pad="0 4px">
            <BigCommand $w={43}><CondIcon /><span>Conditional</span><span>Formatting<Caret /></span></BigCommand>
            <BigCommand $w={37}><TableStyleIcon /><span>Format as</span><span>Table<Caret /></span></BigCommand>
            <Gallery>
              <StyleCell $bg="#fff" $color="#222" $active>Normal</StyleCell>
              <StyleCell $bg="#ffbdc8" $color="#a8203a">Bad</StyleCell>
              <StyleCell $bg="#c3efca" $color="#1d8038">Good</StyleCell>
              <StyleCell $bg="#ffe694" $color="#a8731c">Neutral</StyleCell>
              <GalleryScroll><Caret /><Caret /></GalleryScroll>
            </Gallery>
          </GroupBody>
          <GroupFooter $plain>Styles</GroupFooter>
        </Group>

        <Group $w={89}>
          <GroupBody $pad="0 5px">
            <BigCommand $w={26}><CellsIcon kind="insert" /><span>Insert</span><Caret $below /></BigCommand>
            <BigCommand $w={26}><CellsIcon kind="delete" /><span>Delete</span><Caret $below /></BigCommand>
            <BigCommand $w={26}><FormatIcon /><span>Format</span><Caret $below /></BigCommand>
          </GroupBody>
          <GroupFooter $plain>Cells</GroupFooter>
        </Group>

        <Group $w={120}>
          <GroupBody $pad="0 0 0 6px" $gap={2}>
            <Stack>
              <Command><Glyph $size={10} $bold>Σ</Glyph>AutoSum <Caret /></Command>
              <Command><FillDownIcon />Fill<Caret /></Command>
              <Command><EraserIcon />Clear<Caret /></Command>
            </Stack>
            <BigCommand $w={27}><SortIcon /><span>Sort &amp;</span><span>Filter<Caret /></span></BigCommand>
            <BigCommand $w={27}><FindIcon /><span>Find &amp;</span><span>Select<Caret /></span></BigCommand>
          </GroupBody>
          <GroupFooter $plain>Editing</GroupFooter>
        </Group>
        <CollapseRibbon aria-label="Collapse ribbon"><ChevronUp size={9} /></CollapseRibbon>
      </Ribbon>

      <FormulaBar>
        <NameBox>
          <input aria-label="Name box" defaultValue="H27" />
          <Caret />
        </NameBox>
        <DotHandle><i /><i /><i /></DotHandle>
        <FormulaButtons>
          <IconButton $dim aria-label="Cancel"><X size={10} /></IconButton>
          <IconButton $dim aria-label="Enter"><Check size={10} /></IconButton>
          <IconButton><FxGlyph $size={10} $bold $italic>fx</FxGlyph></IconButton>
        </FormulaButtons>
        <FormulaField>
          <textarea aria-label="Formula" />
          <button aria-label="Collapse formula bar"><ChevronUp size={7} strokeWidth={4} /></button>
        </FormulaField>
      </FormulaBar>

      <WorkArea>
        <Canvas>
          <Corner>-</Corner>
          {columnSets.map((set, i) => (
            <ColumnHead key={i}>
              {i === 0 && (
                <Ruler>
                  <RulerEnd />
                  {range(9).map((n) => (
                    <Inch key={n} $lit={n === 5}>
                      <i />
                      <i />
                      <i />
                      <i />
                      <span>{n + 1}</span>
                    </Inch>
                  ))}
                  <RulerEnd>10</RulerEnd>
                </Ruler>
              )}
              <Letters>
                {set.map((c) => (
                  <Letter key={c} $on={c === "H" && i === 0}>{c}</Letter>
                ))}
              </Letters>
            </ColumnHead>
          ))}
          <Rail first={1} count={34} ruler />
          <Page $live>
            <PageHeader>
              <span>3/9/20215:06 PM</span>
              <span>hh</span>
            </PageHeader>
            <DataSheet />
            <PageFooter>1</PageFooter>
            <MoveCursor width="16" height="16" viewBox="0 0 16 16" fill="#fff" stroke="#222" strokeWidth=".8">
              <path d="M6 4v8l2-1.500 1.500 3 1.500-.7-1.500-3h2.500z" />
              <path d="M6 1v3M3 5h3M9 5h3M10 2l1 2M12 11v4M10 13h4" strokeWidth="1.200" />
            </MoveCursor>
          </Page>
          <Page><BlankSheet /></Page>
          <Page><BlankSheet /></Page>
          <Rail first={35} count={4} />
          <Page><BlankSheet /></Page>
          <Page><BlankSheet /></Page>
          <Page><BlankSheet /></Page>
        </Canvas>
        <VScroll>
          <ScrollButton aria-label="Scroll up">▴</ScrollButton>
          <ScrollThumb $rest />
          <ScrollButton aria-label="Scroll down">▾</ScrollButton>
        </VScroll>
      </WorkArea>

      <SheetBar>
        <SheetNav>
          <IconButton $w={5} aria-label="Previous sheet">◂</IconButton>
          <IconButton $w={5} aria-label="Next sheet">▸</IconButton>
        </SheetNav>
        {sheets.map((s) => (
          <SheetTab key={s} $active={s === activeSheet} onClick={() => setActiveSheet(s)}>
            {s}
          </SheetTab>
        ))}
        <IconButton $w={43} $h={14} aria-label="New sheet">
          <svg width="11" height="11" viewBox="0 0 11 11" fill="none" stroke="#ccc">
            <circle cx="5.500" cy="5.500" r="4.700" />
            <path d="M5.500 3v5M3 5.500h5" />
          </svg>
        </IconButton>
        <HScroll>
          <DotHandle $h={12}><i /><i /><i /></DotHandle>
          <ScrollButton aria-label="Scroll left">◂</ScrollButton>
          <HTrack><ScrollThumb /></HTrack>
          <ScrollButton aria-label="Scroll right">▸</ScrollButton>
        </HScroll>
      </SheetBar>

      <StatusBar>
        <span>Drag to move cell contents, use Alt key to switch sheets</span>
        <Row>
          <IconButton $w={24} aria-label="Normal view">
            <svg width="9" height="9" viewBox="0 0 9 9" fill="none" stroke="#ccc">
              <path d="M.5.500h8v8h-8zM.5 3h8M.5 6h8M3 .5v8M6 .5v8" strokeWidth=".8" />
            </svg>
          </IconButton>
          <IconButton $w={25} $on aria-label="Page layout view">
            <svg width="9" height="9" viewBox="0 0 9 9" fill="none" stroke="#ccc">
              <path d="M.5.500h8v8h-8zM2.500 2.500h4v4h-4zM3 4.500h3" strokeWidth=".8" />
            </svg>
          </IconButton>
          <IconButton $w={24} aria-label="Page break view">
            <svg width="9" height="9" viewBox="0 0 9 9" fill="#ddd">
              <path d="M0 0h9v9H7V6H4v3H0z" />
              <path d="M5 0v5M4 5.500h5" stroke="#262626" />
            </svg>
          </IconButton>
          <Zoom>
            <span>−</span>
            <input
              type="range"
              aria-label="Zoom"
              min="10"
              max="160"
              value={zoom}
              onChange={(e) => setZoom(Number(e.target.value))}
            />
            <span>+</span>
            <IconButton $w={18}>{zoom}%</IconButton>
          </Zoom>
        </Row>
      </StatusBar>

      <Taskbar>
        <StartArea>
          <IconButton $w={10} aria-label="Start"><FaWindows size={10} /></IconButton>
          <IconButton $w={10} aria-label="Search"><Mirrored><Search size={11} /></Mirrored></IconButton>
          <IconButton $w={10} aria-label="Cortana">
            <svg width="10" height="10" viewBox="0 0 10 10" fill="none" stroke="#eee" strokeWidth="1.300">
              <circle cx="5" cy="5" r="4" />
            </svg>
          </IconButton>
        </StartArea>
        <TaskButton $w={57}><Folder />3. TECH PA...</TaskButton>
        <TaskButton $w={57} $after={3}><Folder />2021-03-01...</TaskButton>
        <Pinned>
          <button aria-label="Opera"><FaOpera size={10} color="#e0202c" /></button>
          <button aria-label="Edge"><EdgeIcon /></button>
          <button aria-label="Mail"><MailIcon /></button>
          <button aria-label="Word"><WordIcon /></button>
          <button aria-label="Twitter"><RoundTile $bg="#33a4dc" $radius="1px"><FaTwitter size={7} /></RoundTile></button>
          <button aria-label="Telegram"><RoundTile $bg="#2fa3d9"><FaTelegramPlane size={6} /></RoundTile></button>
          <button><AppTile $color="#dfe9f5" $bg="#dfe9f5" $ink="#1c5ba8" $size={8}>R</AppTile></button>
          <button><AppTile $color="#6a4fd0" $ink="#b6a4ff">Br</AppTile></button>
          <button><AppTile $color="#9a62e8">Ae</AppTile></button>
          <button><AppTile $color="#178fc0" $bg="#04202e">Ps</AppTile></button>
          <button><AppTile $color="#d06a1c" $bg="#2a1200">Ai</AppTile></button>
          <button><AppTile $color="#8fb4cc" $bg="#0a1c28">Lr</AppTile></button>
          <button aria-label="Acrobat"><AcrobatIcon /></button>
          <button aria-label="WhatsApp"><RoundTile $bg="#37c05a"><FaWhatsapp size={8} /></RoundTile></button>
          <button><AppTile $color="#b01880" $bg="#4a0538" $ink="#ffb8ea">Xd</AppTile></button>
          <button><AppTile $color="#c04ad8">Pr</AppTile></button>
          <button aria-label="Notes"><NotesIcon /></button>
          <button aria-label="Recorder"><ObsIcon /></button>
          <button aria-label="Cloud"><CloudTile /></button>
          <button aria-label="Chrome"><ChromeIcon /></button>
        </Pinned>
        <TaskButton $w={57}><ZoomIcon />Zoom</TaskButton>
        <TaskButton $w={57} $after={3}><ZoomIcon />Meeting C...</TaskButton>
        <TaskButton $w={62} $active $after={4}><ExcelIcon />Book1 - Ex...</TaskButton>
        <Tray>
          <ChevronUp size={10} />
          <Wifi size={10} />
          <UsbIcon />
          <Cloud size={10} fill="#fff" />
          <BatteryIcon />
          <Volume2 size={10} />
          <span>5:07 PM</span>
          <NoticeIcon />
        </Tray>
      </Taskbar>

      <Udemy>ûdemy</Udemy>
      <Watermark>
        <WatermarkLogo />
        <WatermarkText>
          <strong>灵感中国</strong>
          <span>lingganchina<small>.com</small></span>
        </WatermarkText>
      </Watermark>
    </Window>
  );
}
